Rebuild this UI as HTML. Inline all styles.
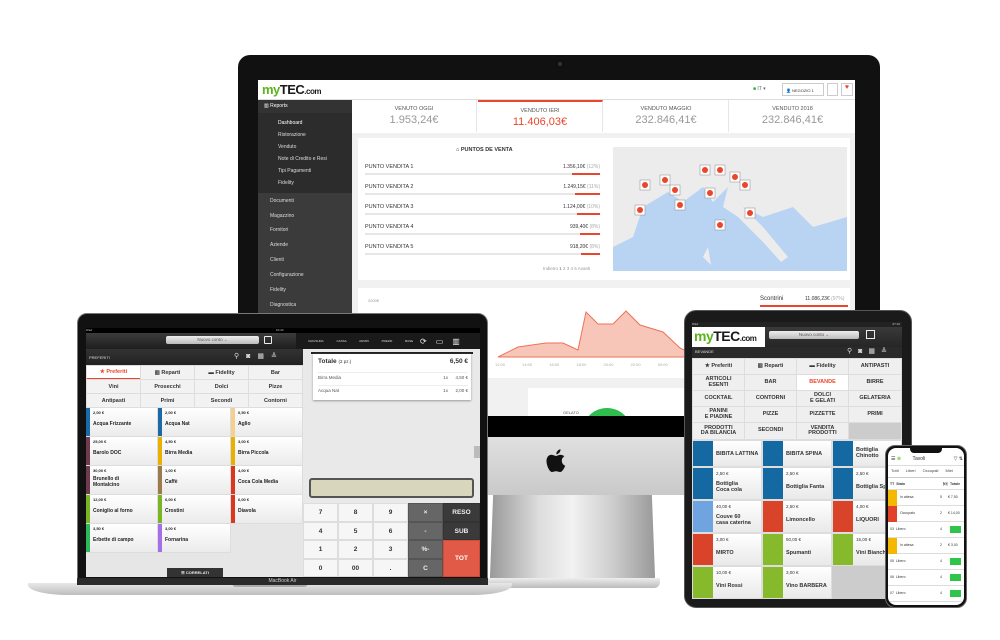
<!DOCTYPE html>
<html><head><meta charset="utf-8"><style>
*{margin:0;padding:0;box-sizing:border-box}
body{width:1000px;height:640px;background:#fff;position:relative;overflow:hidden;font-family:"Liberation Sans",Arial,sans-serif;color:#333}
.a{position:absolute}
.sb div{position:absolute;left:0;width:94px;font-size:5px;color:#ddd;padding-left:20px}
.st{position:absolute;top:20px;height:32px;width:125px;text-align:center;border-right:1px solid #e6e6e6}
.st b{display:block;font-weight:normal;font-size:5.5px;color:#555;margin-top:6px}
.st i{display:block;font-style:normal;font-size:11px;color:#999;margin-top:2px}
.pv{position:absolute;left:365px;width:235px;font-size:5.5px;color:#333}
.pv span{position:absolute;right:0;font-size:5px}
.pv em{position:absolute;left:0;top:9px;width:235px;height:2px;background:#e6e6e6}
.pv u{position:absolute;right:0;top:9px;height:2px;background:#e9462b}
.tb{position:absolute;font-size:5.5px;font-weight:bold;text-align:center;color:#333;background:#f2f2f2;border:1px solid #ddd;display:flex;align-items:center;justify-content:center}
.pr{position:absolute;background:linear-gradient(#fff,#ebebeb);border-right:1px solid #ddd;border-bottom:1px solid #ddd;font-size:5px;font-weight:bold;color:#222;padding-left:7px}
.pr i{position:absolute;left:0;top:0;bottom:0;width:4px}
.pr s{text-decoration:none;position:absolute;top:2px;left:7px;font-size:4px}
.pr b{position:absolute;top:13px;left:7px}
.k{position:absolute;font-size:6.5px;font-weight:bold;display:flex;align-items:center;justify-content:center;border:1px solid #ddd}
.tt{position:absolute;font-size:5.5px;font-weight:bold;color:#333;background:#efefef;border:1px solid #ddd;display:flex;align-items:center;justify-content:center;text-align:center;line-height:1}
.tp{position:absolute;background:linear-gradient(#fff,#e9e9e9);border:1px solid #ddd;font-size:5.5px;font-weight:bold}
.tp i{position:absolute;left:0;top:0;bottom:0;width:20px}
.tp s{text-decoration:none;position:absolute;left:23px;top:3px;font-size:4.5px;font-weight:normal}
.tp b{position:absolute;left:23px;top:13px}
.ph{position:absolute;left:0;width:78px;height:10px;border-bottom:1px solid #ddd;font-size:3.5px}
</style></head><body>

<!-- iMac -->
<div class="a" style="left:238px;top:55px;width:642px;height:385px;background:#111;border-radius:12px 12px 0 0"></div>
<div class="a" style="left:558px;top:62px;width:4px;height:4px;border-radius:50%;background:#333"></div>
<div class="a" style="left:490px;top:490px;width:165px;height:98px;background:linear-gradient(90deg,#999,#ddd 30%,#f2f2f2 50%,#ccc 75%,#999);clip-path:polygon(2% 0,98% 0,100% 88%,103% 100%,-3% 100%,0 88%)"></div>
<div class="a" style="left:488px;top:578px;width:172px;height:10px;background:linear-gradient(#eee,#bbb);border-radius:0 0 6px 6px"></div>
<div class="a" style="left:488px;top:437px;width:200px;height:58px;background:linear-gradient(#e0e0e0,#c9c9c9)"></div>
<svg class="a" style="left:545px;top:448px" width="22" height="26" viewBox="0 0 22 26"><path fill="#111" d="M11 8c-1.2 0-2.8-1.2-4.5-1.2C3.5 6.8 1.5 9.5 1.5 13c0 4.5 3 11 5.5 11 1.2 0 2.2-.8 4-.8s2.6.8 4 .8c2.5 0 4.5-4.5 5.2-6.3-2.3-1-3.4-2.9-3.4-5.1 0-2 1-3.4 2.5-4.4C18 7.3 16.3 6.8 15.3 6.8 13.5 6.8 12.2 8 11 8z"/><path fill="#111" d="M11.3 6.2C11.2 4 12.9 1.6 15.5 1.2c.2 2.5-1.7 4.9-4.2 5z"/></svg>

<!-- iMac screen -->
<div class="a" style="left:258px;top:80px;width:597px;height:336px;background:#f1f1f1;overflow:hidden">
 <div class="a" style="left:0;top:0;width:597px;height:20px;background:#fff;border-bottom:1px solid #ddd"></div>
 <div class="a" style="left:4px;top:2px;font-size:13px;font-weight:bold;letter-spacing:-.5px;color:#1a1a1a;font-family:'Liberation Sans'"><span style="color:#5bb31e">my</span>TEC<span style="font-size:8px">.com</span></div>
 <div class="a" style="left:495px;top:6px;font-size:5px;color:#666"><span style="color:#3a3;">■</span> IT ▾</div>
 <div class="a" style="left:524px;top:3px;width:42px;height:13px;border:1px solid #ccc;font-size:4px;padding:4px 3px">👤 NEGOZIO 1</div>
 <div class="a" style="left:569px;top:3px;width:11px;height:13px;border:1px solid #ccc"></div>
 <div class="a" style="left:583px;top:3px;width:12px;height:13px;border:1px solid #ccc;color:#e9462b;font-size:7px;text-align:center">♥</div>
 <div class="a sb" style="left:0;top:20px;width:94px;height:316px;background:#3b3b3b">
  <div style="top:0;height:13px;background:#333;padding-top:3px;padding-left:6px;color:#fff">▥ Reports</div>
  <div style="top:13px;height:80px;background:#2c2c2c"></div>
  <div style="top:20px;color:#fff">Dashboard</div>
  <div style="top:32px">Ristorazione</div>
  <div style="top:44px">Venduto</div>
  <div style="top:56px">Note di Credito e Resi</div>
  <div style="top:68px">Tipi Pagamenti</div>
  <div style="top:80px">Fidelity</div>
  <div style="top:98px;padding-left:12px">Documenti</div>
  <div style="top:113px;padding-left:12px">Magazzino</div>
  <div style="top:127px;padding-left:12px">Fornitori</div>
  <div style="top:142px;padding-left:12px">Aziende</div>
  <div style="top:157px;padding-left:12px">Clienti</div>
  <div style="top:172px;padding-left:12px">Configurazione</div>
  <div style="top:187px;padding-left:12px">Fidelity</div>
  <div style="top:202px;padding-left:12px">Diagnostica</div>
 </div>
 <div class="a" style="left:94px;top:20px;width:503px;height:33px;background:#fff"></div>
 <div class="st" style="left:94px"><b>VENUTO OGGI</b><i>1.953,24€</i></div>
 <div class="st" style="left:220px;border-top:2px solid #e9462b"><b>VENDUTO IERI</b><i style="color:#e9462b">11.406,03€</i></div>
 <div class="st" style="left:346px"><b>VENDUTO MAGGIO</b><i>232.846,41€</i></div>
 <div class="st" style="left:472px;border:0"><b>VENDUTO 2018</b><i>232.846,41€</i></div>
 <div class="a" style="left:100px;top:58px;width:492px;height:142px;background:#fff"></div>
 <div class="a" style="left:198px;top:67px;font-size:5.5px;font-weight:bold">⌂ PUNTOS DE VENTA</div>
 <div class="a" style="left:355px;top:67px;width:234px;height:124px;background:#b8d4f2;overflow:hidden">
  <svg width="234" height="124"><path d="M0 0H234V70L200 80 180 60 150 70 130 60 115 40 100 55 90 40 70 55 55 45 30 60 20 90 0 100Z" fill="#ececec"/><path d="M115 40 130 60 150 80 175 110 168 115 150 95 125 70 110 60Z" fill="#ececec"/><path d="M90 110 95 100 98 118Z" fill="#ececec"/></svg>
 </div>
</div>
<div class="pv" style="top:164px">PUNTO VENDITA 1<span>1.356,10€ <font color=#aaa>(12%)</font></span><em></em><u style="width:28px"></u></div>
<div class="pv" style="top:184px">PUNTO VENDITA 2<span>1.249,15€ <font color=#aaa>(11%)</font></span><em></em><u style="width:25px"></u></div>
<div class="pv" style="top:204px">PUNTO VENDITA 3<span>1.124,00€ <font color=#aaa>(10%)</font></span><em></em><u style="width:23px"></u></div>
<div class="pv" style="top:224px">PUNTO VENDITA 4<span>939,40€ <font color=#aaa>(8%)</font></span><em></em><u style="width:20px"></u></div>
<div class="pv" style="top:244px">PUNTO VENDITA 5<span>918,20€ <font color=#aaa>(8%)</font></span><em></em><u style="width:19px"></u></div>
<div class="a" style="left:543px;top:266px;font-size:4.5px;color:#999">Indietro <b>1</b> 2 3 4 5 Avanti</div>
<svg class="a" style="left:630px;top:160px" width="140" height="80">
 <g fill="#fff" stroke="#888" stroke-width=".5"><rect x="10" y="20" width="10" height="10"/><rect x="30" y="15" width="10" height="10"/><rect x="70" y="5" width="10" height="10"/><rect x="85" y="5" width="10" height="10"/><rect x="100" y="12" width="10" height="10"/><rect x="110" y="20" width="10" height="10"/><rect x="45" y="40" width="10" height="10"/><rect x="75" y="28" width="10" height="10"/><rect x="5" y="45" width="10" height="10"/><rect x="85" y="60" width="10" height="10"/><rect x="115" y="48" width="10" height="10"/><rect x="40" y="25" width="10" height="10"/></g>
 <g fill="#e9462b"><circle cx="15" cy="25" r="3"/><circle cx="35" cy="20" r="3"/><circle cx="75" cy="10" r="3"/><circle cx="90" cy="10" r="3"/><circle cx="105" cy="17" r="3"/><circle cx="115" cy="25" r="3"/><circle cx="50" cy="45" r="3"/><circle cx="80" cy="33" r="3"/><circle cx="10" cy="50" r="3"/><circle cx="90" cy="65" r="3"/><circle cx="120" cy="53" r="3"/><circle cx="45" cy="30" r="3"/></g>
</svg>
<div class="a" style="left:358px;top:288px;width:492px;height:90px;background:#fff"></div>
<div class="a" style="left:368px;top:298px;font-size:4px;color:#999">2000€</div>
<div class="a" style="left:760px;top:296px;font-size:6px;color:#333">Scontrini <span style="margin-left:20px;font-size:5px">11.086,23€ <font color=#aaa>(97%)</font></span></div>
<div class="a" style="left:760px;top:305px;width:88px;height:2px;background:#e9462b"></div>
<svg class="a" style="left:358px;top:300px" width="340" height="60"><path d="M140 57 160 47 188 43 205 43 220 50 228 12 240 24 255 24 268 11 282 25 305 32 322 48 340 57Z" fill="#f8c6b8" stroke="#ef7159" stroke-width="1"/></svg>
<div class="a" style="left:495px;top:362px;font-size:4px;color:#aaa;word-spacing:16px">12:00 14:00 16:00 18:00 20:00 22:00 00:00</div>
<div class="a" style="left:358px;top:388px;width:130px;height:30px;background:#fff"></div>
<div class="a" style="left:528px;top:388px;width:160px;height:30px;background:#fff"></div>
<div class="a" style="left:582px;top:408px;width:50px;height:25px;border-radius:25px 25px 0 0;background:#2ebd4e"></div>
<div class="a" style="left:563px;top:410px;font-size:4px;color:#555">GELATO</div>
<div class="a" style="left:488px;top:416px;width:200px;height:21px;background:#000"></div>

<!-- Laptop -->
<div class="a" style="left:28px;top:583px;width:484px;height:12px;background:linear-gradient(#e8e8e8,#bdbdbd);border-radius:0 0 40px 40px / 0 0 10px 10px"></div>
<div class="a" style="left:232px;top:583px;width:76px;height:4px;background:#aaa;border-radius:0 0 4px 4px"></div>
<div class="a" style="left:77px;top:313px;width:411px;height:272px;background:#111;border-radius:10px 10px 0 0;border:1px solid #777"></div>
<div class="a" style="left:77px;top:578px;width:411px;height:7px;background:#2a2a2a;color:#ccc;font-size:5px;text-align:center">MacBook Air</div>
<div class="a" style="left:86px;top:328px;width:394px;height:249px;background:#e6e6e6;overflow:hidden">
 <div class="a" style="left:0;top:0;width:394px;height:5px;background:#000;font-size:3px;color:#ccc">iPad<span style="position:absolute;left:190px">10:43</span></div>
 <div class="a" style="left:0;top:5px;width:394px;height:16px;background:linear-gradient(#3c3c3c,#1e1e1e)"></div>
 <div class="a" style="left:210px;top:5px;width:184px;height:16px;background:#1a1a1a"></div>
 <div class="a" style="left:80px;top:8px;width:93px;height:8px;background:linear-gradient(#eee,#bbb);border-radius:2px;font-size:4.5px;color:#555;text-align:center;line-height:8px">Nuovo conto <font color=#e9462b>⌄</font></div>
 <div class="a" style="left:178px;top:8px;width:8px;height:8px;border:1.5px solid #eee;border-radius:1px"></div>
 <div class="a" style="left:222px;top:11px;font-size:3px;color:#ddd;word-spacing:12px">CHIUSURA&nbsp;CASSA ADMIN PREZZI&nbsp;BASE</div>
 <div class="a" style="left:334px;top:9px;font-size:8px;color:#eee;letter-spacing:9px">⟳▭▥</div>
 <div class="a" style="left:0;top:21px;width:217px;height:16px;background:linear-gradient(#333,#222);font-size:4px;color:#ddd;padding:6px 3px">PREFERITI<span style="position:absolute;left:148px;top:3px;font-size:7px;letter-spacing:7px">⚲◙▦≜</span></div>
 <div class="tb" style="left:0;top:37px;width:55px;height:15px;background:#fff;color:#e9462b;border-bottom:2px solid #e9462b">★ Preferiti</div>
 <div class="tb" style="left:54px;top:37px;width:55px;height:15px">▥ Reparti</div>
 <div class="tb" style="left:108px;top:37px;width:55px;height:15px">▬ Fidelity</div>
 <div class="tb" style="left:162px;top:37px;width:55px;height:15px">Bar</div>
 <div class="tb" style="left:0;top:51px;width:55px;height:15px">Vini</div>
 <div class="tb" style="left:54px;top:51px;width:55px;height:15px">Prosecchi</div>
 <div class="tb" style="left:108px;top:51px;width:55px;height:15px">Dolci</div>
 <div class="tb" style="left:162px;top:51px;width:55px;height:15px">Pizze</div>
 <div class="tb" style="left:0;top:65px;width:55px;height:15px">Antipasti</div>
 <div class="tb" style="left:54px;top:65px;width:55px;height:15px">Primi</div>
 <div class="tb" style="left:108px;top:65px;width:55px;height:15px">Secondi</div>
 <div class="tb" style="left:162px;top:65px;width:55px;height:15px">Contorni</div>
 <div class="pr" style="left:0;top:80px;width:72px;height:29px"><i style="background:#1a6aa8"></i><s>2,00 €</s><b>Acqua Frizzante</b></div>
 <div class="pr" style="left:72px;top:80px;width:73px;height:29px"><i style="background:#1a6aa8"></i><s>2,00 €</s><b>Acqua Nat</b></div>
 <div class="pr" style="left:145px;top:80px;width:72px;height:29px"><i style="background:#f4cf8e"></i><s>0,50 €</s><b>Aglio</b></div>
 <div class="pr" style="left:0;top:109px;width:72px;height:29px"><i style="background:#6e3a4e"></i><s>25,00 €</s><b>Barolo DOC</b></div>
 <div class="pr" style="left:72px;top:109px;width:73px;height:29px"><i style="background:#e8b100"></i><s>4,50 €</s><b>Birra Media</b></div>
 <div class="pr" style="left:145px;top:109px;width:72px;height:29px"><i style="background:#e8b100"></i><s>3,00 €</s><b>Birra Piccola</b></div>
 <div class="pr" style="left:0;top:138px;width:72px;height:29px"><i style="background:#6e3a4e"></i><s>30,00 €</s><b style="top:10px">Brunello di<br>Montalcino</b></div>
 <div class="pr" style="left:72px;top:138px;width:73px;height:29px"><i style="background:#9b7a4e"></i><s>1,00 €</s><b>Caffè</b></div>
 <div class="pr" style="left:145px;top:138px;width:72px;height:29px"><i style="background:#d9381e"></i><s>4,00 €</s><b>Coca Cola Media</b></div>
 <div class="pr" style="left:0;top:167px;width:72px;height:29px"><i style="background:#7ab526"></i><s>12,00 €</s><b>Coniglio al forno</b></div>
 <div class="pr" style="left:72px;top:167px;width:73px;height:29px"><i style="background:#7ab526"></i><s>6,00 €</s><b>Crostini</b></div>
 <div class="pr" style="left:145px;top:167px;width:72px;height:29px"><i style="background:#d9381e"></i><s>6,00 €</s><b>Diavola</b></div>
 <div class="pr" style="left:0;top:196px;width:72px;height:29px"><i style="background:#2eb85c"></i><s>3,50 €</s><b>Erbette di campo</b></div>
 <div class="pr" style="left:72px;top:196px;width:73px;height:29px"><i style="background:#a370e8"></i><s>3,00 €</s><b>Fornarina</b></div>
 <div class="a" style="left:81px;top:240px;width:56px;height:9px;background:#333;color:#eee;font-size:4px;font-weight:bold;text-align:center;line-height:9px">☰ CORRELATI</div>
 <div class="a" style="left:217px;top:21px;width:177px;height:228px;background:#e9e9e9"></div>
 <div class="a" style="left:225px;top:24px;width:162px;height:2px;background:#222"></div>
 <div class="a" style="left:227px;top:26px;width:158px;height:46px;background:#fff;box-shadow:0 1px 2px #999"></div>
 <div class="a" style="left:232px;top:30px;width:150px;font-size:6.5px;font-weight:bold">Totale <span style="font-weight:normal;font-size:4.5px">(2 pz.)</span><span style="float:right">6,50 €</span></div>
 <div class="a" style="left:232px;top:44px;width:150px;font-size:4.5px;color:#555;border-top:1px solid #eee;padding-top:2px">Birra Media<span style="float:right">1x &nbsp;&nbsp;&nbsp;&nbsp;&nbsp;4,50 €</span></div>
 <div class="a" style="left:232px;top:57px;width:150px;font-size:4.5px;color:#555;border-top:1px solid #eee;padding-top:2px">Acqua Nat<span style="float:right">1x &nbsp;&nbsp;&nbsp;&nbsp;&nbsp;2,00 €</span></div>
 <div class="a" style="left:223px;top:150px;width:165px;height:20px;background:#d8d7bd;border:2px solid #555;border-radius:3px"></div>
 <div class="a" style="left:388px;top:118px;width:6px;height:12px;background:#bbb"></div>
</div>
<div class="k" style="left:303px;top:503px;width:35px;height:19px;background:#f6f6f6">7</div>
<div class="k" style="left:338px;top:503px;width:35px;height:19px;background:#f6f6f6">8</div>
<div class="k" style="left:373px;top:503px;width:35px;height:19px;background:#f6f6f6">9</div>
<div class="k" style="left:303px;top:522px;width:35px;height:18px;background:#f6f6f6">4</div>
<div class="k" style="left:338px;top:522px;width:35px;height:18px;background:#f6f6f6">5</div>
<div class="k" style="left:373px;top:522px;width:35px;height:18px;background:#f6f6f6">6</div>
<div class="k" style="left:303px;top:540px;width:35px;height:19px;background:#f6f6f6">1</div>
<div class="k" style="left:338px;top:540px;width:35px;height:19px;background:#f6f6f6">2</div>
<div class="k" style="left:373px;top:540px;width:35px;height:19px;background:#f6f6f6">3</div>
<div class="k" style="left:303px;top:559px;width:35px;height:18px;background:#f6f6f6">0</div>
<div class="k" style="left:338px;top:559px;width:35px;height:18px;background:#f6f6f6">00</div>
<div class="k" style="left:373px;top:559px;width:35px;height:18px;background:#f6f6f6">.</div>
<div class="k" style="left:408px;top:503px;width:35px;height:19px;background:#666;color:#eee;border-color:#555">×</div>
<div class="k" style="left:408px;top:522px;width:35px;height:18px;background:#666;color:#eee;border-color:#555">-</div>
<div class="k" style="left:408px;top:540px;width:35px;height:19px;background:#666;color:#eee;border-color:#555">%-</div>
<div class="k" style="left:408px;top:559px;width:35px;height:18px;background:#666;color:#eee;border-color:#555">C</div>
<div class="k" style="left:443px;top:503px;width:37px;height:19px;background:#3a3a3a;color:#eee;border-color:#333">RESO</div>
<div class="k" style="left:443px;top:522px;width:37px;height:18px;background:#3a3a3a;color:#eee;border-color:#333">SUB</div>
<div class="k" style="left:443px;top:540px;width:37px;height:37px;background:#e05a47;color:#fff;border-color:#d04a37">TOT</div>

<!-- Tablet -->
<div class="a" style="left:684px;top:310px;width:228px;height:298px;background:#1a1a1a;border-radius:12px;border:1px solid #555"></div>
<div class="a" style="left:692px;top:322px;width:210px;height:277px;background:#ddd;overflow:hidden">
 <div class="a" style="left:0;top:0;width:210px;height:5px;background:#222;font-size:3px;color:#ccc">iPad<span style="position:absolute;right:2px">07:10</span></div>
 <div class="a" style="left:0;top:5px;width:210px;height:24px;background:linear-gradient(#3a3a3a,#222)"></div>
 <div class="a" style="left:0;top:5px;width:73px;height:20px;background:#fff;font-size:14px;font-weight:bold;letter-spacing:-.5px;padding-left:2px;line-height:18px;color:#1a1a1a"><span style="color:#5bb31e">my</span>TEC<span style="font-size:8px">.com</span></div>
 <div class="a" style="left:77px;top:9px;width:90px;height:8px;background:linear-gradient(#eee,#bbb);border-radius:2px;font-size:4.5px;color:#555;text-align:center;line-height:8px">Nuovo conto <font color=#e9462b>⌄</font></div>
 <div class="a" style="left:174px;top:8px;width:9px;height:9px;border:1.5px solid #eee"></div>
 <div class="a" style="left:0;top:25px;width:210px;height:11px;background:#2a2a2a;font-size:4px;color:#ddd;padding:2px 3px">BEVANDE<span style="position:absolute;left:155px;top:0;font-size:7px;letter-spacing:6px">⚲◙▦≜</span></div>
</div>
<div class="tt" style="left:692px;top:358px;width:53px;height:17px">★ Preferiti</div>
<div class="tt" style="left:744px;top:358px;width:53px;height:17px">▥ Reparti</div>
<div class="tt" style="left:796px;top:358px;width:53px;height:17px">▬ Fidelity</div>
<div class="tt" style="left:848px;top:358px;width:54px;height:17px">ANTIPASTI</div>
<div class="tt" style="left:692px;top:374px;width:53px;height:17px">ARTICOLI<br>ESENTI</div>
<div class="tt" style="left:744px;top:374px;width:53px;height:17px">BAR</div>
<div class="tt" style="left:796px;top:374px;width:53px;height:17px;background:#fff;color:#e9462b;border-bottom:1.5px solid #e9462b">BEVANDE</div>
<div class="tt" style="left:848px;top:374px;width:54px;height:17px">BIRRE</div>
<div class="tt" style="left:692px;top:390px;width:53px;height:17px">COCKTAIL</div>
<div class="tt" style="left:744px;top:390px;width:53px;height:17px">CONTORNI</div>
<div class="tt" style="left:796px;top:390px;width:53px;height:17px">DOLCI<br>E GELATI</div>
<div class="tt" style="left:848px;top:390px;width:54px;height:17px">GELATERIA</div>
<div class="tt" style="left:692px;top:406px;width:53px;height:17px">PANINI<br>E PIADINE</div>
<div class="tt" style="left:744px;top:406px;width:53px;height:17px">PIZZE</div>
<div class="tt" style="left:796px;top:406px;width:53px;height:17px">PIZZETTE</div>
<div class="tt" style="left:848px;top:406px;width:54px;height:17px">PRIMI</div>
<div class="tt" style="left:692px;top:422px;width:53px;height:18px">PRODOTTI<br>DA BILANCIA</div>
<div class="tt" style="left:744px;top:422px;width:53px;height:18px">SECONDI</div>
<div class="tt" style="left:796px;top:422px;width:53px;height:18px">VENDITA<br>PRODOTTI</div>
<div class="tt" style="left:848px;top:422px;width:54px;height:18px;background:#ccc"></div>

<div class="tp" style="left:692px;top:440px;width:70px;height:27px"><i style="background:#1569a3"></i><b style="top:10px">BIBITA LATTINA</b></div>
<div class="tp" style="left:762px;top:440px;width:70px;height:27px"><i style="background:#1569a3"></i><b style="top:10px">BIBITA SPINA</b></div>
<div class="tp" style="left:832px;top:440px;width:70px;height:27px"><i style="background:#1569a3"></i><b style="top:6px">Bottiglia<br>Chinotto</b></div>
<div class="tp" style="left:692px;top:467px;width:70px;height:33px"><i style="background:#1569a3"></i><s>2,50 €</s><b>Bottiglia<br>Coca cola</b></div>
<div class="tp" style="left:762px;top:467px;width:70px;height:33px"><i style="background:#1569a3"></i><s>2,50 €</s><b style="top:16px">Bottiglia Fanta</b></div>
<div class="tp" style="left:832px;top:467px;width:70px;height:33px"><i style="background:#1569a3"></i><s>2,50 €</s><b style="top:16px">Bottiglia Sp</b></div>
<div class="tp" style="left:692px;top:500px;width:70px;height:33px"><i style="background:#6fa4e0"></i><s>40,00 €</s><b>Couve 60<br>casa caterina</b></div>
<div class="tp" style="left:762px;top:500px;width:70px;height:33px"><i style="background:#d9432a"></i><s>2,50 €</s><b style="top:16px">Limoncello</b></div>
<div class="tp" style="left:832px;top:500px;width:70px;height:33px"><i style="background:#d9432a"></i><s>4,00 €</s><b style="top:16px">LIQUORI</b></div>
<div class="tp" style="left:692px;top:533px;width:70px;height:33px"><i style="background:#d9432a"></i><s>3,00 €</s><b style="top:16px">MIRTO</b></div>
<div class="tp" style="left:762px;top:533px;width:70px;height:33px"><i style="background:#86b92b"></i><s>50,00 €</s><b style="top:16px">Spumanti</b></div>
<div class="tp" style="left:832px;top:533px;width:70px;height:33px"><i style="background:#86b92b"></i><s>15,00 €</s><b style="top:16px">Vini Bianchi</b></div>
<div class="tp" style="left:692px;top:566px;width:70px;height:33px"><i style="background:#86b92b"></i><s>10,00 €</s><b style="top:16px">Vini Rossi</b></div>
<div class="tp" style="left:762px;top:566px;width:70px;height:33px"><i style="background:#86b92b"></i><s>3,00 €</s><b style="top:16px">Vino BARBERA</b></div>
<div class="a" style="left:832px;top:566px;width:70px;height:33px;background:#ccc"></div>

<!-- Phone -->
<div class="a" style="left:885px;top:445px;width:82px;height:163px;background:#111;border-radius:10px;border:1px solid #666"></div>
<div class="a" style="left:888px;top:448px;width:76px;height:157px;background:#fff;border-radius:8px;overflow:hidden">
 <div class="a" style="left:22px;top:0;width:32px;height:5px;background:#111;border-radius:0 0 4px 4px"></div>
 <div class="a" style="left:3px;top:8px;width:72px;font-size:5px;color:#333">☰ <font color=#5bb31e>⊗</font> <span style="margin-left:10px">Tavoli</span><span style="float:right">▽ ⇅</span></div>
 <div class="a" style="left:0;top:17px;width:78px;height:1px;background:#ddd"></div>
 <div class="a" style="left:3px;top:20px;font-size:4px;color:#444;word-spacing:6px">Tutti Liberi Occupati Miei</div>
 <div class="a" style="left:0;top:29px;width:78px;height:1px;background:#ccc"></div>
 <div class="ph" style="top:30px;height:12px;padding:4px 2px;font-weight:bold">TT &nbsp;Stato<span style="position:absolute;left:55px">🍽</span><span style="position:absolute;left:62px">Totale</span></div>
 <div class="ph" style="top:42px;height:16px"><i style="position:absolute;left:0;top:0;width:9px;height:16px;background:#f5b800"></i><span style="position:absolute;left:12px;top:5px">In attesa</span><span style="position:absolute;left:52px;top:5px">5</span><span style="position:absolute;left:60px;top:5px">€ 7,50</span></div>
 <div class="ph" style="top:58px;height:16px"><i style="position:absolute;left:0;top:0;width:9px;height:16px;background:#e0432a"></i><span style="position:absolute;left:12px;top:5px">Occupato</span><span style="position:absolute;left:52px;top:5px">2</span><span style="position:absolute;left:60px;top:5px">€ 14,00</span></div>
 <div class="ph" style="top:74px;height:16px"><span style="position:absolute;left:2px;top:5px">03 &nbsp;Libero</span><span style="position:absolute;left:52px;top:5px">4</span><i style="position:absolute;left:62px;top:4px;width:11px;height:7px;background:#2fc44b"></i></div>
 <div class="ph" style="top:90px;height:16px"><i style="position:absolute;left:0;top:0;width:9px;height:16px;background:#f5b800"></i><span style="position:absolute;left:12px;top:5px">In attesa</span><span style="position:absolute;left:52px;top:5px">2</span><span style="position:absolute;left:60px;top:5px">€ 3,00</span></div>
 <div class="ph" style="top:106px;height:16px"><span style="position:absolute;left:2px;top:5px">05 &nbsp;Libero</span><span style="position:absolute;left:52px;top:5px">4</span><i style="position:absolute;left:62px;top:4px;width:11px;height:7px;background:#2fc44b"></i></div>
 <div class="ph" style="top:122px;height:16px"><span style="position:absolute;left:2px;top:5px">06 &nbsp;Libero</span><span style="position:absolute;left:52px;top:5px">4</span><i style="position:absolute;left:62px;top:4px;width:11px;height:7px;background:#2fc44b"></i></div>
 <div class="ph" style="top:138px;height:16px"><span style="position:absolute;left:2px;top:5px">07 &nbsp;Libero</span><span style="position:absolute;left:52px;top:5px">4</span><i style="position:absolute;left:62px;top:4px;width:11px;height:7px;background:#2fc44b"></i></div>
</div>
</body></html>
